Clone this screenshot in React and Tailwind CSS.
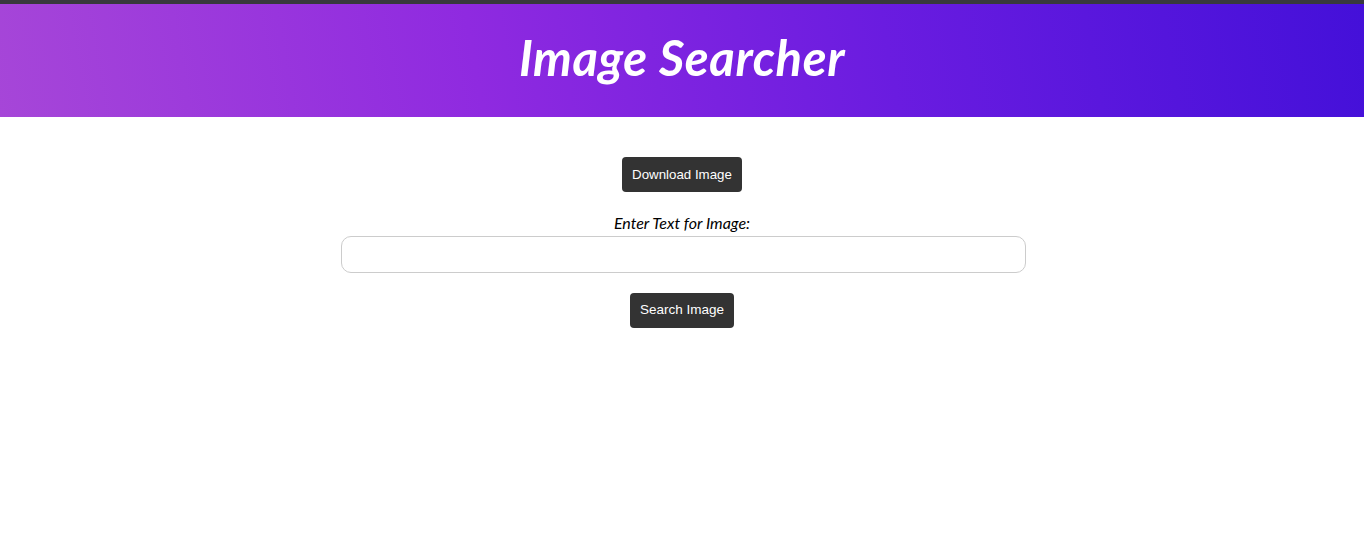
export default function App() {
  return (
    <div className="min-h-screen bg-white" style={{ fontFamily: 'Lato, "Open Sans", sans-serif' }}>
      <div className="h-[4px] bg-[#38393d]" />
      <header className="h-[113px] flex items-center justify-center pb-[6px] bg-[linear-gradient(80deg,#a646d8_0%,#8f2ae0_35%,#6a1ce0_65%,#4410d9_100%)]">
        <h1 className="text-[49px] font-bold italic text-white tracking-[0.6px] leading-none" style={{ fontFamily: 'Lato, sans-serif' }}>
          Image Searcher
        </h1>
      </header>
      <main className="flex flex-col items-center pt-[40px]">
        <button className="h-[35px] px-[10px] rounded-[4px] bg-[#333333] text-white text-[13.3px]" style={{ fontFamily: '"Liberation Sans", Arial, sans-serif' }}>
          Download Image
        </button>
        <label className="mt-[21px] text-[16px] italic text-black leading-[20px]">
          Enter Text for Image:
        </label>
        <input
          type="text"
          className="mt-[3px] ml-[2px] w-[685px] h-[37px] rounded-[10px] border border-[#cccccc] outline-none px-3"
        />
        <button className="mt-[20px] h-[35px] px-[10px] rounded-[4px] bg-[#333333] text-white text-[13.5px]" style={{ fontFamily: '"Liberation Sans", Arial, sans-serif' }}>
          Search Image
        </button>
      </main>
    </div>
  );
}
